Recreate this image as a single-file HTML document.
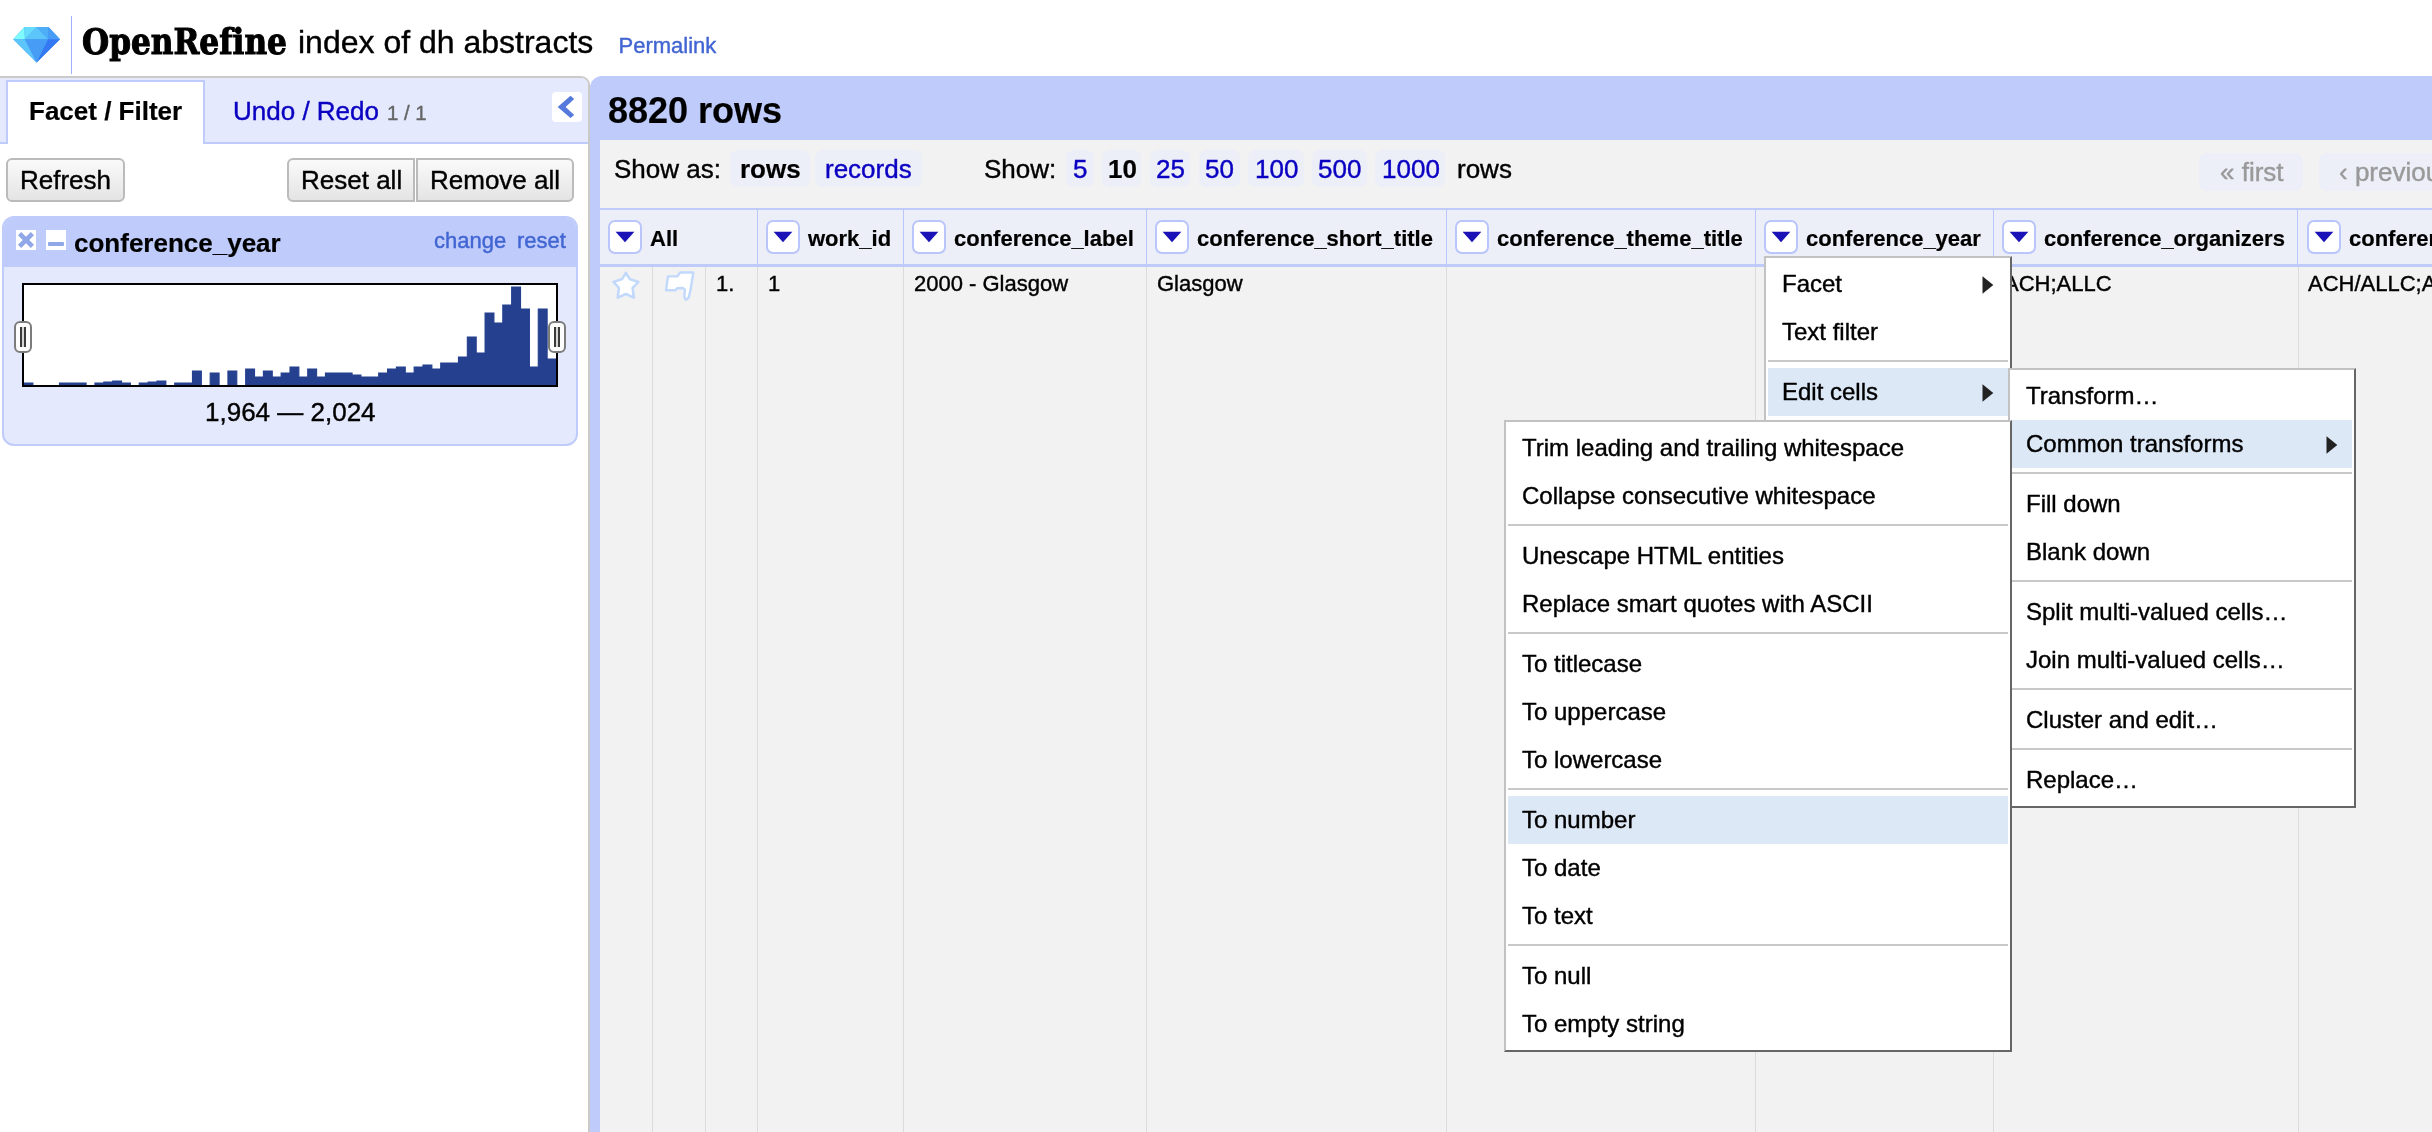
<!DOCTYPE html>
<html lang="en"><head><meta charset="utf-8"><title>index of dh abstracts - OpenRefine</title>
<style>
html,body{margin:0;padding:0;}
body{width:2432px;height:1132px;overflow:hidden;background:#fff;position:relative;font-family:"Liberation Sans", Arial, Helvetica, sans-serif;}
#root{position:absolute;left:0;top:0;width:2432px;height:1132px;overflow:hidden;will-change:transform;}
.b{position:absolute;display:block;}
.t{position:absolute;display:block;white-space:pre;-webkit-text-stroke:0.4px currentColor;}
.t.bd{-webkit-text-stroke:0.2px currentColor;}
</style></head><body>
<div id="root">
<svg class="b" style="left:12px;top:26px" width="50" height="38" viewBox="0 0 50 38">
<polygon points="12.4,1.1 36.5,1.1 48,13.2 24.6,36.6 1.2,13.2" fill="#479cf6"/>
<polygon points="12.4,1.1 1.2,13.2 12.9,13.2" fill="#7dfbfd"/>
<polygon points="12.4,1.1 24.6,1.1 12.9,13.2" fill="#68dafa"/>
<polygon points="24.6,1.1 12.9,13.2 36.1,13.2" fill="#5cc5fa"/>
<polygon points="24.6,1.1 36.5,1.1 36.1,13.2" fill="#4daef7"/>
<polygon points="36.5,1.1 48,13.2 36.1,13.2" fill="#479cf5"/>
<polygon points="1.2,13.2 12.9,13.2 24.6,36.6" fill="#5cc5fa"/>
<polygon points="12.9,13.2 36.1,13.2 24.6,36.6" fill="#479cf6"/>
<polygon points="36.1,13.2 48,13.2 24.6,36.6" fill="#3478f3"/>
</svg>
<div class="b " style="left:71px;top:16px;width:1px;height:58px;background:#9db0f8;"></div>
<span class="t bd" style="left:82px;top:23.86px;font-size:35.6px;line-height:35.6px;color:#000;font-weight:bold;font-family:'DejaVu Serif Condensed', 'DejaVu Serif', 'Liberation Serif', serif;font-stretch:condensed;font-variant-ligatures:none;-webkit-text-stroke:1px #000;transform-origin:0 0;transform:scaleX(0.974);">OpenRefine</span>
<span class="t " style="left:298px;top:25.91px;font-size:32px;line-height:32px;color:#000;">index of dh abstracts</span>
<span class="t " style="left:618.5px;top:35.08px;font-size:22px;line-height:22px;color:#4165d2;">Permalink</span>
<div class="b " style="left:0px;top:76px;width:590px;height:1056px;background:#fff;border-top:2px solid #cacac8;border-right:2px solid #cacac8;border-top-right-radius:9px;box-sizing:border-box;overflow:hidden;"><div class="b" style="left:0;top:0;width:589px;height:64px;background:#e4e9fd;"></div><div class="b" style="left:0;top:64px;width:589px;height:2px;background:#becbfb;"></div></div>
<div class="b " style="left:6px;top:80px;width:199px;height:64px;background:#fff;border:2px solid #becbfb;border-bottom:none;box-sizing:border-box;"></div>
<span class="t bd" style="left:29px;top:97.99px;font-size:26px;line-height:26px;color:#000;font-weight:bold;">Facet / Filter</span>
<span class="t " style="left:233px;top:97.99px;font-size:26px;line-height:26px;color:#0a00c2;">Undo / Redo</span>
<span class="t " style="left:387px;top:102.73px;font-size:20.4px;line-height:20.4px;color:#666;">1 / 1</span>
<div class="b " style="left:552px;top:92px;width:30px;height:30px;background:#fff;border-radius:4px;"><svg width="30" height="30" viewBox="0 0 30 30" style="position:absolute;left:0;top:0"><polygon points="5.7,15 18.5,3.7 22.2,7 13.6,15 22.2,22.9 18.5,26" fill="#5679dc"/></svg></div>
<div class="b " style="left:6px;top:158px;width:119px;height:44px;box-sizing:border-box;border:2px solid #bbb;background:linear-gradient(#fafafa,#e4e4e4);border-radius:6px;"></div>
<span class="t " style="left:20px;top:166.99px;font-size:26px;line-height:26px;color:#000;">Refresh</span>
<div class="b " style="left:287px;top:158px;width:128px;height:44px;box-sizing:border-box;border:2px solid #bbb;background:linear-gradient(#fafafa,#e4e4e4);border-radius:6px 0 0 6px;"></div>
<span class="t " style="left:301px;top:166.99px;font-size:26px;line-height:26px;color:#000;">Reset all</span>
<div class="b " style="left:416px;top:158px;width:158px;height:44px;box-sizing:border-box;border:2px solid #bbb;background:linear-gradient(#fafafa,#e4e4e4);border-radius:0 6px 6px 0;"></div>
<span class="t " style="left:430px;top:166.99px;font-size:26px;line-height:26px;color:#000;">Remove all</span>
<div class="b " style="left:2px;top:216px;width:576px;height:230px;box-sizing:border-box;border:2px solid #becbfb;border-radius:12px;background:#e4e9fd;overflow:hidden;"><div class="b" style="left:0;top:0;width:576px;height:49px;background:#becbfb;"></div></div>
<div class="b " style="left:16px;top:230px;width:20px;height:20px;background:#fff;"><svg width="20" height="20" viewBox="0 0 20 20" style="position:absolute;left:0;top:0"><path d="M3.6,3.6 L16.4,16.4 M16.4,3.6 L3.6,16.4" stroke="#90a8e9" stroke-width="4.6" fill="none"/></svg></div>
<div class="b " style="left:46px;top:230px;width:20px;height:20px;background:#fff;"><div class="b" style="left:2px;top:12px;width:16px;height:4px;border-radius:1px;background:#90a8e9"></div></div>
<span class="t bd" style="left:74px;top:229.99px;font-size:26px;line-height:26px;color:#000;font-weight:bold;">conference_year</span>
<span class="t " style="left:434px;top:230.08px;font-size:22px;line-height:22px;color:#4165d2;">change</span>
<span class="t " style="left:517px;top:230.08px;font-size:22px;line-height:22px;color:#4165d2;">reset</span>
<div class="b " style="left:22px;top:283px;width:536px;height:104px;box-sizing:border-box;border:2px solid #000;background:#fff;"><svg width="532" height="100" viewBox="0 0 532 100" style="position:absolute;left:0;top:0" fill="#24408f"><polygon stroke="#24408f" stroke-width="1.1" stroke-linejoin="miter" points="0,102 0.00,98 8.87,98 8.87,102 17.73,102 17.73,102 26.60,102 26.60,102 35.47,102 35.47,98 44.33,98 44.33,98 53.20,98 53.20,98 62.07,98 62.07,102 70.93,102 70.93,98 79.80,98 79.80,97 88.67,97 88.67,96 97.53,96 97.53,98 106.40,98 106.40,102 115.27,102 115.27,98 124.13,98 124.13,97 133.00,97 133.00,96 141.87,96 141.87,102 150.73,102 150.73,98 159.60,98 159.60,98 168.47,98 168.47,86 177.33,86 177.33,102 186.20,102 186.20,88 195.07,88 195.07,102 203.93,102 203.93,86 212.80,86 212.80,102 221.67,102 221.67,84 230.53,84 230.53,92 239.40,92 239.40,86 248.27,86 248.27,92 257.13,92 257.13,88 266.00,88 266.00,82 274.87,82 274.87,92 283.73,92 283.73,84 292.60,84 292.60,92 301.47,92 301.47,88 310.33,88 310.33,88 319.20,88 319.20,88 328.07,88 328.07,90 336.93,90 336.93,92 345.80,92 345.80,92 354.67,92 354.67,88 363.53,88 363.53,84 372.40,84 372.40,82 381.27,82 381.27,88 390.13,88 390.13,82 399.00,82 399.00,80 407.87,80 407.87,84 416.73,84 416.73,78 425.60,78 425.60,78 434.47,78 434.47,72 443.33,72 443.33,52 452.20,52 452.20,68 461.07,68 461.07,28 469.93,28 469.93,38 478.80,38 478.80,20 487.67,20 487.67,2 496.53,2 496.53,24 505.40,24 505.40,82 514.27,82 514.27,24 523.13,24 523.13,74 532.00,74 532,102"/></svg></div>
<div class="b " style="left:14px;top:321px;width:18px;height:32px;box-sizing:border-box;border:2px solid #7c7c7c;border-radius:6px;background:#fdfdfd;"><div class="b" style="left:4px;top:4px;width:2px;height:20px;background:#3a3a3a"></div><div class="b" style="left:6px;top:4px;width:2px;height:20px;background:#d6d6d6"></div><div class="b" style="left:8px;top:4px;width:2px;height:20px;background:#3a3a3a"></div></div>
<div class="b " style="left:548px;top:321px;width:18px;height:32px;box-sizing:border-box;border:2px solid #7c7c7c;border-radius:6px;background:#fdfdfd;"><div class="b" style="left:4px;top:4px;width:2px;height:20px;background:#3a3a3a"></div><div class="b" style="left:6px;top:4px;width:2px;height:20px;background:#d6d6d6"></div><div class="b" style="left:8px;top:4px;width:2px;height:20px;background:#3a3a3a"></div></div>
<span class="t " style="left:205px;top:398.99px;font-size:26px;line-height:26px;color:#000;">1,964 — 2,024</span>
<div class="b " style="left:590px;top:76px;width:1842px;height:1056px;background:#becbfb;border-top-left-radius:12px;"></div>
<span class="t bd" style="left:608px;top:92.53px;font-size:36px;line-height:36px;color:#000;font-weight:bold;">8820 rows</span>
<div class="b " style="left:600px;top:140px;width:1832px;height:992px;background:#f2f2f2;"></div>
<span class="t " style="left:614px;top:155.79px;font-size:26px;line-height:26px;color:#000;">Show as:</span>
<div class="b " style="left:730px;top:150px;width:80px;height:37px;background:#eceef8;border-radius:8px;"></div>
<span class="t bd" style="left:740px;top:155.79px;font-size:26px;line-height:26px;color:#000;font-weight:bold;">rows</span>
<div class="b " style="left:815px;top:150px;width:107px;height:37px;background:#eceef8;border-radius:8px;"></div>
<span class="t " style="left:825px;top:155.79px;font-size:26px;line-height:26px;color:#0a00c2;">records</span>
<span class="t " style="left:984px;top:155.79px;font-size:26px;line-height:26px;color:#000;">Show:</span>
<div class="b " style="left:1066px;top:150px;width:28px;height:37px;background:#eceef8;border-radius:8px;"></div>
<span class="t " style="left:1073px;top:155.79px;font-size:26px;line-height:26px;color:#0a00c2;">5</span>
<div class="b " style="left:1102px;top:150px;width:39px;height:37px;background:#eceef8;border-radius:8px;"></div>
<span class="t bd" style="left:1108px;top:155.79px;font-size:26px;line-height:26px;color:#000;font-weight:bold;">10</span>
<div class="b " style="left:1150px;top:150px;width:40px;height:37px;background:#eceef8;border-radius:8px;"></div>
<span class="t " style="left:1156px;top:155.79px;font-size:26px;line-height:26px;color:#0a00c2;">25</span>
<div class="b " style="left:1199px;top:150px;width:41px;height:37px;background:#eceef8;border-radius:8px;"></div>
<span class="t " style="left:1205px;top:155.79px;font-size:26px;line-height:26px;color:#0a00c2;">50</span>
<div class="b " style="left:1248px;top:150px;width:56px;height:37px;background:#eceef8;border-radius:8px;"></div>
<span class="t " style="left:1255px;top:155.79px;font-size:26px;line-height:26px;color:#0a00c2;">100</span>
<div class="b " style="left:1312px;top:150px;width:55px;height:37px;background:#eceef8;border-radius:8px;"></div>
<span class="t " style="left:1318px;top:155.79px;font-size:26px;line-height:26px;color:#0a00c2;">500</span>
<div class="b " style="left:1375px;top:150px;width:70px;height:37px;background:#eceef8;border-radius:8px;"></div>
<span class="t " style="left:1382px;top:155.79px;font-size:26px;line-height:26px;color:#0a00c2;">1000</span>
<span class="t " style="left:1457px;top:155.79px;font-size:26px;line-height:26px;color:#000;">rows</span>
<div class="b " style="left:2199px;top:153px;width:104px;height:38px;background:#eceef8;border-radius:8px;"></div>
<span class="t " style="left:2220px;top:158.99px;font-size:26px;line-height:26px;color:#999;">« first</span>
<div class="b " style="left:2319px;top:153px;width:141px;height:38px;background:#eceef8;border-radius:8px;"></div>
<span class="t " style="left:2339px;top:158.99px;font-size:26px;line-height:26px;color:#999;">‹ previous</span>
<div class="b " style="left:600px;top:208px;width:1832px;height:2px;background:#becbfb;"></div>
<div class="b " style="left:600px;top:210px;width:1832px;height:54px;background:#eceef8;"></div>
<div class="b " style="left:600px;top:264px;width:1832px;height:3px;background:#becbfb;"></div>
<div class="b " style="left:757px;top:210px;width:1px;height:54px;background:#b9c6fa;"></div>
<div class="b " style="left:757px;top:267px;width:1px;height:865px;background:#dcdcdc;"></div>
<div class="b " style="left:903px;top:210px;width:1px;height:54px;background:#b9c6fa;"></div>
<div class="b " style="left:903px;top:267px;width:1px;height:865px;background:#dcdcdc;"></div>
<div class="b " style="left:1146px;top:210px;width:1px;height:54px;background:#b9c6fa;"></div>
<div class="b " style="left:1146px;top:267px;width:1px;height:865px;background:#dcdcdc;"></div>
<div class="b " style="left:1446px;top:210px;width:1px;height:54px;background:#b9c6fa;"></div>
<div class="b " style="left:1446px;top:267px;width:1px;height:865px;background:#dcdcdc;"></div>
<div class="b " style="left:1755px;top:210px;width:1px;height:54px;background:#b9c6fa;"></div>
<div class="b " style="left:1755px;top:267px;width:1px;height:865px;background:#dcdcdc;"></div>
<div class="b " style="left:1993px;top:210px;width:1px;height:54px;background:#b9c6fa;"></div>
<div class="b " style="left:1993px;top:267px;width:1px;height:865px;background:#dcdcdc;"></div>
<div class="b " style="left:2297px;top:210px;width:1px;height:54px;background:#b9c6fa;"></div>
<div class="b " style="left:2298px;top:267px;width:1px;height:865px;background:#dcdcdc;"></div>
<div class="b " style="left:652px;top:267px;width:1px;height:865px;background:#dcdcdc;"></div>
<div class="b " style="left:705px;top:267px;width:1px;height:865px;background:#dcdcdc;"></div>
<div class="b " style="left:608px;top:220px;width:34px;height:34px;box-sizing:border-box;border:2px solid #b9c5fb;border-radius:7px;background:#fff;"><svg width="29" height="29" viewBox="0 0 29 29" style="position:absolute;left:0;top:0"><polygon points="5.6,9.8 24.4,9.8 15,20.2" fill="#1a12b6"/></svg></div>
<span class="t bd" style="left:650px;top:228.38px;font-size:22px;line-height:22px;color:#000;font-weight:bold;">All</span>
<div class="b " style="left:766px;top:220px;width:34px;height:34px;box-sizing:border-box;border:2px solid #b9c5fb;border-radius:7px;background:#fff;"><svg width="29" height="29" viewBox="0 0 29 29" style="position:absolute;left:0;top:0"><polygon points="5.6,9.8 24.4,9.8 15,20.2" fill="#1a12b6"/></svg></div>
<span class="t bd" style="left:808px;top:228.38px;font-size:22px;line-height:22px;color:#000;font-weight:bold;">work_id</span>
<div class="b " style="left:912px;top:220px;width:34px;height:34px;box-sizing:border-box;border:2px solid #b9c5fb;border-radius:7px;background:#fff;"><svg width="29" height="29" viewBox="0 0 29 29" style="position:absolute;left:0;top:0"><polygon points="5.6,9.8 24.4,9.8 15,20.2" fill="#1a12b6"/></svg></div>
<span class="t bd" style="left:954px;top:228.38px;font-size:22px;line-height:22px;color:#000;font-weight:bold;">conference_label</span>
<div class="b " style="left:1155px;top:220px;width:34px;height:34px;box-sizing:border-box;border:2px solid #b9c5fb;border-radius:7px;background:#fff;"><svg width="29" height="29" viewBox="0 0 29 29" style="position:absolute;left:0;top:0"><polygon points="5.6,9.8 24.4,9.8 15,20.2" fill="#1a12b6"/></svg></div>
<span class="t bd" style="left:1197px;top:228.38px;font-size:22px;line-height:22px;color:#000;font-weight:bold;">conference_short_title</span>
<div class="b " style="left:1455px;top:220px;width:34px;height:34px;box-sizing:border-box;border:2px solid #b9c5fb;border-radius:7px;background:#fff;"><svg width="29" height="29" viewBox="0 0 29 29" style="position:absolute;left:0;top:0"><polygon points="5.6,9.8 24.4,9.8 15,20.2" fill="#1a12b6"/></svg></div>
<span class="t bd" style="left:1497px;top:228.38px;font-size:22px;line-height:22px;color:#000;font-weight:bold;">conference_theme_title</span>
<div class="b " style="left:1764px;top:220px;width:34px;height:34px;box-sizing:border-box;border:2px solid #b9c5fb;border-radius:7px;background:#fff;"><svg width="29" height="29" viewBox="0 0 29 29" style="position:absolute;left:0;top:0"><polygon points="5.6,9.8 24.4,9.8 15,20.2" fill="#1a12b6"/></svg></div>
<span class="t bd" style="left:1806px;top:228.38px;font-size:22px;line-height:22px;color:#000;font-weight:bold;">conference_year</span>
<div class="b " style="left:2002px;top:220px;width:34px;height:34px;box-sizing:border-box;border:2px solid #b9c5fb;border-radius:7px;background:#fff;"><svg width="29" height="29" viewBox="0 0 29 29" style="position:absolute;left:0;top:0"><polygon points="5.6,9.8 24.4,9.8 15,20.2" fill="#1a12b6"/></svg></div>
<span class="t bd" style="left:2044px;top:228.38px;font-size:22px;line-height:22px;color:#000;font-weight:bold;">conference_organizers</span>
<div class="b " style="left:2307px;top:220px;width:34px;height:34px;box-sizing:border-box;border:2px solid #b9c5fb;border-radius:7px;background:#fff;"><svg width="29" height="29" viewBox="0 0 29 29" style="position:absolute;left:0;top:0"><polygon points="5.6,9.8 24.4,9.8 15,20.2" fill="#1a12b6"/></svg></div>
<span class="t bd" style="left:2349px;top:228.38px;font-size:22px;line-height:22px;color:#000;font-weight:bold;">conference_series</span>
<span class="t " style="left:716px;top:273.38px;font-size:22px;line-height:22px;color:#000;">1.</span>
<span class="t " style="left:768px;top:273.38px;font-size:22px;line-height:22px;color:#000;">1</span>
<span class="t " style="left:914px;top:273.38px;font-size:22px;line-height:22px;color:#000;">2000 - Glasgow</span>
<span class="t " style="left:1157px;top:273.38px;font-size:22px;line-height:22px;color:#000;">Glasgow</span>
<span class="t " style="left:2004px;top:273.38px;font-size:22px;line-height:22px;color:#000;">ACH;ALLC</span>
<span class="t " style="left:2308px;top:273.38px;font-size:22px;line-height:22px;color:#000;">ACH/ALLC;ACH</span>
<svg class="b" style="left:608px;top:268px" width="36" height="36" viewBox="0 0 36 36">
<polygon points="17.9,4.8 21.6,10.9 30.4,13.9 24.6,19.8 25.9,29.6 17.9,26.0 9.7,29.6 10.9,19.8 5.4,13.9 14.2,10.9" fill="#fff" stroke="#c3d9fc" stroke-width="2.6" stroke-linejoin="round"/></svg>
<svg class="b" style="left:660px;top:268px" width="40" height="38" viewBox="0 0 40 38">
<polygon points="8.0,8.4 17.2,8.4 20.2,4.5 33.3,4.5 30.6,21.6 28.6,29.8 25.8,31.8 24.2,28.5 25.0,21.6 22.9,20.0 17.4,20.2 15.5,22.2 6.0,22.2" fill="#fff" stroke="#c3d9fc" stroke-width="2.4" stroke-linejoin="round"/></svg>
<div class="b " style="left:1764px;top:256px;width:248px;height:444px;box-sizing:border-box;background:#fff;border:2px solid #c2c2c2;border-right-color:#666;border-bottom-color:#666;"></div>
<span class="t " style="left:1782px;top:271.88px;font-size:24px;line-height:24px;color:#000;">Facet</span>
<svg class="b" style="left:1981.5px;top:276px" width="12" height="18" viewBox="0 0 12 18"><polygon points="0.5,0.3 11.3,9 0.5,17.7" fill="#222"/></svg>
<span class="t " style="left:1782px;top:319.88px;font-size:24px;line-height:24px;color:#000;">Text filter</span>
<div class="b " style="left:1768px;top:360px;width:240px;height:2px;background:#c8c8c8;"></div>
<div class="b " style="left:1768px;top:368px;width:240px;height:48px;background:#dde8f6;"></div>
<span class="t " style="left:1782px;top:379.88px;font-size:24px;line-height:24px;color:#000;">Edit cells</span>
<svg class="b" style="left:1981.5px;top:384px" width="12" height="18" viewBox="0 0 12 18"><polygon points="0.5,0.3 11.3,9 0.5,17.7" fill="#222"/></svg>
<div class="b " style="left:2008px;top:368px;width:348px;height:440px;box-sizing:border-box;background:#fff;border:2px solid #c2c2c2;border-right-color:#666;border-bottom-color:#666;"></div>
<span class="t " style="left:2026px;top:383.88px;font-size:24px;line-height:24px;color:#000;">Transform…</span>
<div class="b " style="left:2012px;top:420px;width:340px;height:48px;background:#dde8f6;"></div>
<span class="t " style="left:2026px;top:431.88px;font-size:24px;line-height:24px;color:#000;">Common transforms</span>
<svg class="b" style="left:2325.5px;top:436px" width="12" height="18" viewBox="0 0 12 18"><polygon points="0.5,0.3 11.3,9 0.5,17.7" fill="#222"/></svg>
<div class="b " style="left:2012px;top:472px;width:340px;height:2px;background:#c8c8c8;"></div>
<span class="t " style="left:2026px;top:491.88px;font-size:24px;line-height:24px;color:#000;">Fill down</span>
<span class="t " style="left:2026px;top:539.88px;font-size:24px;line-height:24px;color:#000;">Blank down</span>
<div class="b " style="left:2012px;top:580px;width:340px;height:2px;background:#c8c8c8;"></div>
<span class="t " style="left:2026px;top:599.88px;font-size:24px;line-height:24px;color:#000;">Split multi-valued cells…</span>
<span class="t " style="left:2026px;top:647.88px;font-size:24px;line-height:24px;color:#000;">Join multi-valued cells…</span>
<div class="b " style="left:2012px;top:688px;width:340px;height:2px;background:#c8c8c8;"></div>
<span class="t " style="left:2026px;top:707.88px;font-size:24px;line-height:24px;color:#000;">Cluster and edit…</span>
<div class="b " style="left:2012px;top:748px;width:340px;height:2px;background:#c8c8c8;"></div>
<span class="t " style="left:2026px;top:767.88px;font-size:24px;line-height:24px;color:#000;">Replace…</span>
<div class="b " style="left:1504px;top:420px;width:508px;height:632px;box-sizing:border-box;background:#fff;border:2px solid #c2c2c2;border-right-color:#666;border-bottom-color:#666;"></div>
<span class="t " style="left:1522px;top:435.88px;font-size:24px;line-height:24px;color:#000;">Trim leading and trailing whitespace</span>
<span class="t " style="left:1522px;top:483.88px;font-size:24px;line-height:24px;color:#000;">Collapse consecutive whitespace</span>
<div class="b " style="left:1508px;top:524px;width:500px;height:2px;background:#c8c8c8;"></div>
<span class="t " style="left:1522px;top:543.88px;font-size:24px;line-height:24px;color:#000;">Unescape HTML entities</span>
<span class="t " style="left:1522px;top:591.88px;font-size:24px;line-height:24px;color:#000;">Replace smart quotes with ASCII</span>
<div class="b " style="left:1508px;top:632px;width:500px;height:2px;background:#c8c8c8;"></div>
<span class="t " style="left:1522px;top:651.88px;font-size:24px;line-height:24px;color:#000;">To titlecase</span>
<span class="t " style="left:1522px;top:699.88px;font-size:24px;line-height:24px;color:#000;">To uppercase</span>
<span class="t " style="left:1522px;top:747.88px;font-size:24px;line-height:24px;color:#000;">To lowercase</span>
<div class="b " style="left:1508px;top:788px;width:500px;height:2px;background:#c8c8c8;"></div>
<div class="b " style="left:1508px;top:796px;width:500px;height:48px;background:#dde8f6;"></div>
<span class="t " style="left:1522px;top:807.88px;font-size:24px;line-height:24px;color:#000;">To number</span>
<span class="t " style="left:1522px;top:855.88px;font-size:24px;line-height:24px;color:#000;">To date</span>
<span class="t " style="left:1522px;top:903.88px;font-size:24px;line-height:24px;color:#000;">To text</span>
<div class="b " style="left:1508px;top:944px;width:500px;height:2px;background:#c8c8c8;"></div>
<span class="t " style="left:1522px;top:963.88px;font-size:24px;line-height:24px;color:#000;">To null</span>
<span class="t " style="left:1522px;top:1011.88px;font-size:24px;line-height:24px;color:#000;">To empty string</span>
</div>
</body></html>
